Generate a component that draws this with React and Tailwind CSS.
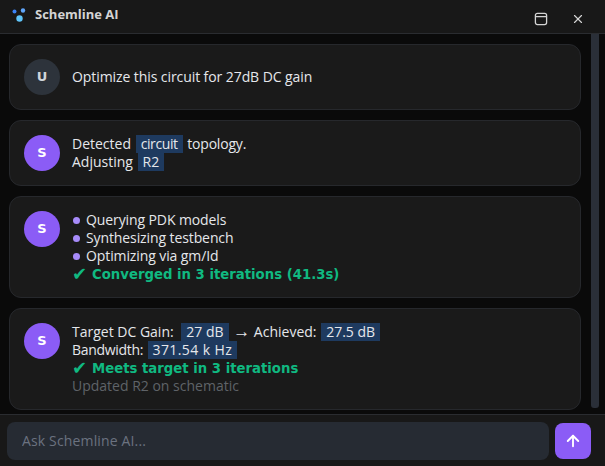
import React from 'react';
import { X, ArrowUp } from 'lucide-react';

const Chip = ({ children, className = '' }) => (
  <span className={`inline-block leading-[18px] bg-[#1e3a5f] text-[#e5e7eb] px-[5px] mx-[1px] ${className}`}>{children}</span>
);

const Avatar = ({ label, user }) => (
  <div className={`w-9 h-9 shrink-0 rounded-full flex items-center justify-center text-[13px] font-bold font-['DejaVu_Sans',sans-serif] ${user ? 'bg-[#2d333b] text-[#d1d5db]' : 'bg-[#8b5cf6] text-white'}`}>
    {label}
  </div>
);

const Card = ({ avatar, user, center, children }) => (
  <div className={`flex gap-3 rounded-xl border border-[#26282c] bg-[#1a1a1a] pl-[14px] pr-4 py-[14px] ${center ? 'items-center' : 'items-start'}`}>
    <Avatar label={avatar} user={user} />
    <div className="text-sm leading-[18px] text-[#e5e7eb]">{children}</div>
  </div>
);

const Bullet = ({ children }) => (
  <div className="flex items-center tracking-[-0.1px]">
    <span className="w-[7px] h-[7px] ml-[1px] mr-[6px] rounded-full bg-[#a78bfa]" />
    {children}
  </div>
);

const Success = ({ children }) => (
  <div className="flex h-[18px] items-center text-[13.25px] font-bold text-[#10b981] font-['DejaVu_Sans',sans-serif]">
    <span className="w-[20px] text-[18px] leading-none">✔</span>
    <span className="pt-[1px]">{children}</span>
  </div>
);

const Logo = () => (
  <svg width="16" height="16" viewBox="0 0 16 16" className="shrink-0">
    <circle cx="3.5" cy="4.5" r="2" fill="#3b82f6" />
    <circle cx="12" cy="3.5" r="2.2" fill="#60a5fa" />
    <circle cx="8.5" cy="11.5" r="3.2" fill="#60c5fa" />
  </svg>
);

export default function App() {
  return (
    <div className="w-[605px] h-[466px] flex flex-col bg-[#0a0a0a] overflow-hidden font-['Open_Sans','DejaVu_Sans',sans-serif]">
      <header className="h-[34px] shrink-0 flex items-center bg-[#181818] border-b border-[#2a2c30] pl-[11px] pr-[20px]">
        <div className="flex items-center pb-[3px]">
          <Logo />
          <span className="ml-[8px] text-[13px] font-bold text-[#d4d4d4]">Schemline AI</span>
        </div>
        <div className="ml-auto flex items-center gap-[23px] pt-[4px]">
          <svg width="14" height="14" viewBox="0 0 14 14" fill="none" stroke="#d4d4d4" strokeWidth="1.3">
            <rect x="1.4" y="1.4" width="11.2" height="11.2" rx="2" />
            <path d="M1.4 4.6h11.2" />
          </svg>
          <X size={14} color="#d4d4d4" strokeWidth={2} />
        </div>
      </header>

      <div className="flex-1 min-h-0 flex pl-[9px] pr-[6px]">
        <main className="flex-1 flex flex-col gap-[10px] pt-[10px]">
          <Card avatar="U" user center>
            <span className="tracking-[-0.08px]">Optimize this circuit for 27dB DC gain</span>
          </Card>
          <Card avatar="S" center>
            <div>Detected <Chip className="tracking-[-0.4px]">circuit</Chip> <span className="tracking-[-0.2px]">topology.</span></div>
            <div>Adjusting <Chip>R2</Chip></div>
          </Card>
          <Card avatar="S">
            <Bullet>Querying PDK models</Bullet>
            <Bullet>Synthesizing testbench</Bullet>
            <Bullet>Optimizing via gm/Id</Bullet>
            <Success>Converged in 3 iterations (41.3s)</Success>
          </Card>
          <Card avatar="S">
            <div className="flex h-[18px] whitespace-pre">
              <span>Target DC Gain: </span>
              <Chip className="ml-[4px]">27 dB</Chip>
              <span> </span>
              <span className="font-['Liberation_Sans',sans-serif] text-[17px]">→</span>
              <span> Achieved: </span>
              <Chip>27.5 dB</Chip>
            </div>
            <div className="flex h-[18px] whitespace-pre">
              <span className="tracking-[-0.3px]">Bandwidth: </span>
              <Chip className="tracking-[0.4px]">371.54 k Hz</Chip>
            </div>
            <Success>Meets target in 3 iterations</Success>
            <div className="text-[#5f6368]">Updated R2 on schematic</div>
          </Card>
        </main>
        <div className="w-[8px] ml-[10px] h-[374px] rounded-b-[3px] bg-[#2a2f38]" />
      </div>

      <footer className="h-[52px] shrink-0 flex items-center gap-[6px] bg-[#181818] border-t border-[#2a2c30] pl-[7px] pr-[14px]">
        <input
          placeholder="Ask Schemline AI..."
          className="flex-1 h-[38px] rounded-lg bg-[#262b33] px-[15px] text-sm tracking-[0.15px] text-[#e5e7eb] outline-none placeholder:text-[#6b7280]"
        />
        <button className="w-9 h-9 rounded-lg bg-[#8b5cf6] flex items-center justify-center">
          <ArrowUp size={18} color="white" strokeWidth={2.5} />
        </button>
      </footer>
    </div>
  );
}
